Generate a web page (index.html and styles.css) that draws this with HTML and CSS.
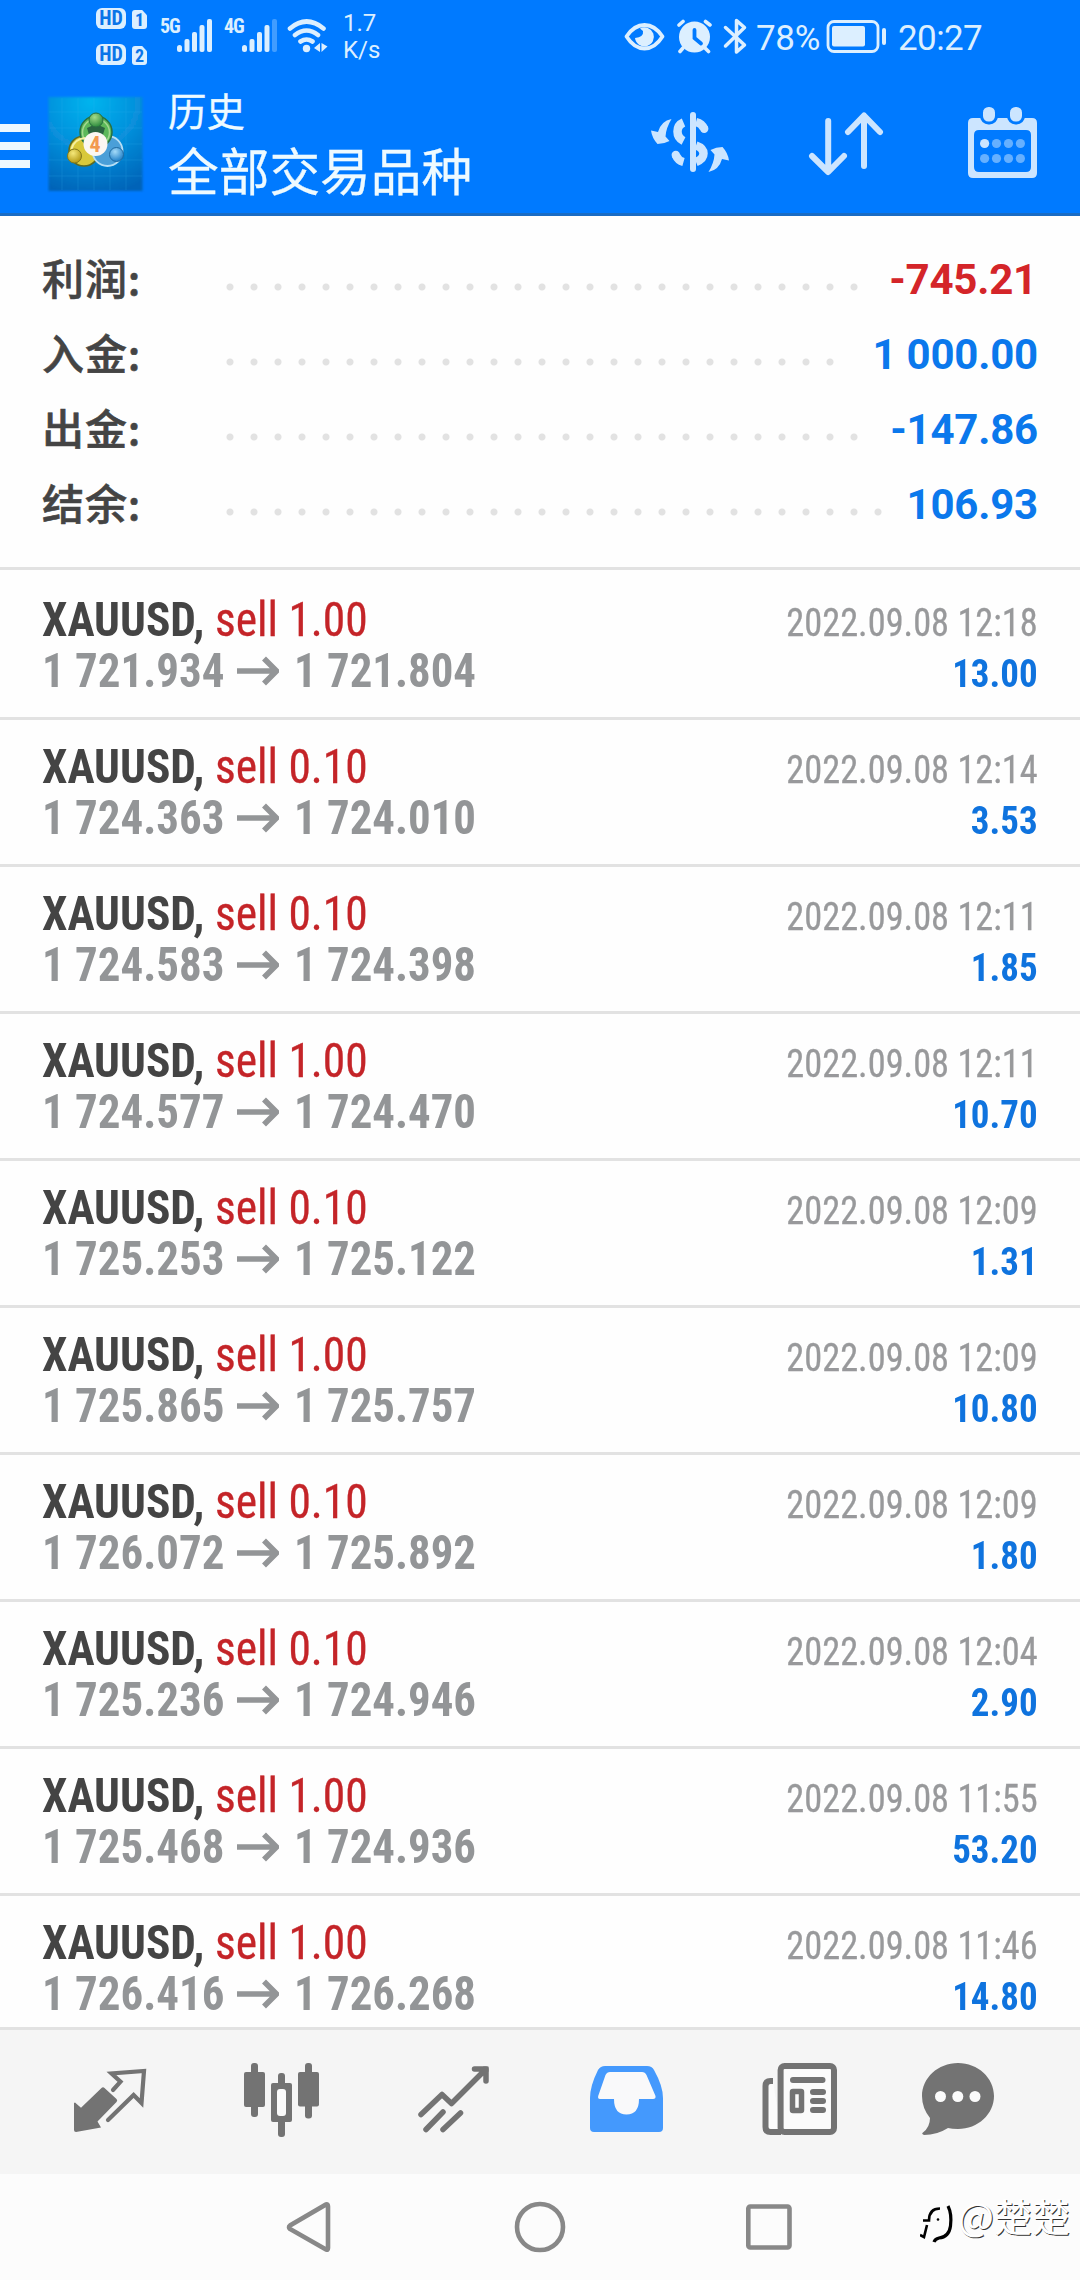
FILE: index.html
```html
<!DOCTYPE html>
<html lang="zh-CN">
<head>
<meta charset="utf-8">
<title>历史</title>
<link rel="stylesheet" href="styles.css">
</head>
<body>
<svg class="defs" width="0" height="0">
  <symbol id="arrow" viewBox="0 0 42 30"><path d="M0 15H38M27 2.500L39.500 15L27 27.500" fill="none" stroke="#939597" stroke-width="5.600"/></symbol>
</svg>

<header class="header">
  <div class="status">
    <div class="hd-col">
      <div class="hd-row"><span class="hd">HD</span><span class="sim">1</span></div>
      <div class="hd-row"><span class="hd">HD</span><span class="sim">2</span></div>
    </div>
    <span class="gen">5G</span>
    <svg class="signal" viewBox="0 0 35 34" width="35" height="34" fill="#dcefff"><rect x="0" y="26" width="5" height="7" rx="2.500"/><rect x="7.500" y="20" width="5" height="13" rx="2"/><rect x="15" y="13" width="5" height="20" rx="2"/><rect x="22.500" y="6" width="5" height="27" rx="2"/><rect x="30" y="0" width="5" height="33" rx="2"/></svg>
    <span class="gen gen-4">4G</span>
    <svg class="signal" viewBox="0 0 35 34" width="35" height="34" fill="#dcefff"><rect x="0" y="26" width="5" height="7" rx="2.500"/><rect x="7.500" y="20" width="5" height="13" rx="2"/><rect x="15" y="13" width="5" height="20" rx="2"/><rect x="22.500" y="6" width="5" height="27" rx="2"/><rect x="30" y="0" width="5" height="33" rx="2" opacity=".3"/></svg>
    <svg class="wifi" viewBox="287 18 41 36" width="41" height="36" fill="none" stroke="#dcefff" stroke-width="4.600" stroke-linecap="round"><path d="M290 28.500Q306.500 14.500 323.500 28.500M295 35Q306.500 26 318 35M300.500 41.500Q306.500 37.500 312.500 41.500"/><circle cx="306.500" cy="48.500" r="3.700" fill="#dcefff" stroke="none"/><path d="M314 48L320 43V52ZM321.500 43L327.500 46.500L321.500 52Z" fill="#dcefff" stroke="none"/></svg>
    <div class="speed"><span>1.7</span><span>K/s</span></div>
    <svg class="eye" viewBox="624 22 41 30" width="41" height="30"><path d="M626.500 36.500Q634 25 644.500 25T662.500 36.500Q655 48.500 644.500 48.500T626.500 36.500Z" fill="none" stroke="#dcefff" stroke-width="3.800" stroke-linejoin="round"/><path d="M640 28.500A9.500 9.500 0 1 1 635 38Q644 37 643 31Z" fill="#dcefff"/></svg>
    <svg class="alarm" viewBox="676 19 37 35" width="37" height="35"><path d="M679 25L683 21.500M710 25L705.500 21.500M683 48L680 51.500M705 48L708.500 51.500" stroke="#dcefff" stroke-width="3.600" stroke-linecap="round"/><circle cx="694.500" cy="37" r="15.500" fill="#dcefff"/><path d="M694.500 30V38L701 43.500" fill="none" stroke="#007aff" stroke-width="3.800" stroke-linecap="round"/></svg>
    <svg class="bt" viewBox="723 17 25 38" width="25" height="38"><path d="M725.500 27.500L744.500 45L736.500 52V20.500L744.500 27.500L725.500 46" fill="none" stroke="#dcefff" stroke-width="3.500" stroke-linecap="round" stroke-linejoin="round"/></svg>
    <span class="pct">78%</span>
    <svg class="batt" viewBox="826 19 61 35" width="61" height="35"><rect x="828" y="21.500" width="50" height="30" rx="6" fill="none" stroke="#dcefff" stroke-width="2.800"/><rect x="832" y="26" width="33" height="20.500" rx="2" fill="#dcefff"/><rect x="882" y="28" width="4" height="17" rx="2" fill="#dcefff"/></svg>
    <span class="clock">20:27</span>
  </div>

  <div class="appbar">
    <svg class="menu" viewBox="0 124 30 44" width="30" height="44" fill="#eef8ff"><path d="M0 124H30V132H0ZM0 142H30V150H0ZM0 160H30V168H0Z"/></svg>
    <svg class="logo" viewBox="47 95 98 98" width="98" height="98">
      <defs>
        <radialGradient id="lg" cx=".45" cy=".05" r="1"><stop offset="0" stop-color="#00b4ee"/><stop offset=".5" stop-color="#0790dc"/><stop offset="1" stop-color="#0064b8"/></radialGradient>
        <radialGradient id="gg" cx=".4" cy=".3" r=".7"><stop offset="0" stop-color="#a5dc8a"/><stop offset="1" stop-color="#2c8a3c"/></radialGradient>
        <radialGradient id="yg" cx=".4" cy=".3" r=".7"><stop offset="0" stop-color="#f5e87a"/><stop offset="1" stop-color="#b49a14"/></radialGradient>
        <radialGradient id="bg" cx=".4" cy=".3" r=".7"><stop offset="0" stop-color="#a4daf8"/><stop offset="1" stop-color="#2080c8"/></radialGradient>
        <filter id="soft"><feGaussianBlur stdDeviation="1.200"/></filter>
      </defs>
      <rect x="48.500" y="97" width="94" height="94" fill="url(#lg)" filter="url(#soft)"/>
      <path d="M62 98V190M78 98V190M94 98V190M110 98V190M126 98V190M49 112H142M49 128H142M49 144H142M49 160H142M49 176H142" stroke="#3ab4f0" stroke-width=".8" opacity=".25"/>
      <circle cx="84" cy="151" r="15" fill="#d8c83a" stroke="#5e6a20" stroke-width="1.500"/>
      <circle cx="107.500" cy="151" r="15" fill="#4a9fd8" stroke="#b6def4" stroke-width="1.800"/>
      <circle cx="96" cy="132" r="16" fill="#5cb85a" stroke="#2a7040" stroke-width="1.500"/>
      <circle cx="96" cy="132.500" r="13.500" fill="none" stroke="#a4d890" stroke-width="1.500"/>
      <path d="M71.500 149Q74 139 85 138" fill="none" stroke="#f5f0a0" stroke-width="2"/>
      <path d="M87 128L96 124L105 128L102 138H90Z" fill="#2b6440"/>
      <circle cx="74.500" cy="156" r="7" fill="url(#yg)" stroke="#83791a"/>
      <circle cx="116.500" cy="154.500" r="7" fill="url(#bg)" stroke="#206aa0"/>
      <circle cx="96" cy="120" r="7" fill="url(#gg)" stroke="#2a7040"/>
      <circle cx="95.500" cy="144" r="12" fill="#fbf7f2"/>
      <text x="95" y="151.500" text-anchor="middle" class="logo-num">4</text>
    </svg>
    <div class="titles"><div class="t1">历史</div><div class="t2">全部交易品种</div></div>
    <div class="actions">
      <svg viewBox="650 106 80 74" width="80" height="74">
        <g fill="none" stroke="#cce5ff" stroke-width="8.500"><path d="M683.500 122.500C675.500 126 675.500 137 683.500 141"/><path d="M683.500 162Q678 160.500 676 155.500M696 122Q702 123.500 704 128.500"/><path d="M696 145.500C706 149 706 158 696 162"/></g>
        <g fill="#cce5ff"><circle cx="675.800" cy="155" r="4.200"/><circle cx="704.200" cy="128.800" r="4.200"/><rect x="690" y="112" width="6" height="60" rx="3"/>
        <path id="swap" d="M671.500 119Q666 128 665.500 136.500L669.500 141Q664 144 657.500 144Q652 138 651 130.500L658 132Q661 121 671.500 119Z"/><use href="#swap" transform="rotate(180 690 145.500)"/></g>
      </svg>
      <svg class="sort" viewBox="808 106 76 74" width="76" height="74"><path d="M828.200 121V171M812 156L828.200 172L844 156M864 166V116M848 132L864 115.500L880 132" fill="none" stroke="#cce5ff" stroke-width="6" stroke-linecap="round" stroke-linejoin="round"/></svg>
      <svg class="cal" viewBox="967 106 71 74" width="71" height="74"><path fill-rule="evenodd" fill="#cce5ff" d="M973 118H1032Q1037 118 1037 123V173Q1037 178 1032 178H973Q968 178 968 173V123Q968 118 973 118ZM979 130Q974 130 974 135V167Q974 172 979 172H1026Q1031 172 1031 167V135Q1031 130 1026 130Z"/><g fill="#cce5ff" stroke="#007aff" stroke-width="3"><rect x="981.500" y="105.500" width="15" height="17.500" rx="7"/><rect x="1008.500" y="105.500" width="15" height="17.500" rx="7"/></g><g fill="#66b0ff"><circle cx="984.600" cy="143.500" r="4.600" fill="#cce5ff"/><circle cx="996.500" cy="143.500" r="4.600"/><circle cx="1008.500" cy="143.500" r="4.600"/><circle cx="1020.400" cy="143.500" r="4.600"/><circle cx="984.600" cy="158.500" r="4.600"/><circle cx="996.500" cy="158.500" r="4.600"/><circle cx="1008.500" cy="158.500" r="4.600"/><circle cx="1020.400" cy="158.500" r="4.600"/></g></svg>
    </div>
  </div>
</header>

<section class="summary">
  <div class="sum-row"><span class="label">利润:</span><span class="dots" style="width:648px"></span><span class="value neg">-745.21</span></div>
  <div class="sum-row"><span class="label">入金:</span><span class="dots" style="width:624px"></span><span class="value">1 000.00</span></div>
  <div class="sum-row"><span class="label">出金:</span><span class="dots" style="width:648px"></span><span class="value">-147.86</span></div>
  <div class="sum-row"><span class="label">结余:</span><span class="dots" style="width:672px"></span><span class="value">106.93</span></div>
</section>

<main class="deals">
  <article class="deal"><div class="l1"><b class="sym">XAUUSD,</b><span class="op">sell 1.00</span></div><time>2022.09.08 12:18</time><div class="l2"><span class="px">1 721.934</span><svg><use href="#arrow"/></svg><span class="px">1 721.804</span></div><span class="profit">13.00</span></article>
  <article class="deal"><div class="l1"><b class="sym">XAUUSD,</b><span class="op">sell 0.10</span></div><time>2022.09.08 12:14</time><div class="l2"><span class="px">1 724.363</span><svg><use href="#arrow"/></svg><span class="px">1 724.010</span></div><span class="profit">3.53</span></article>
  <article class="deal"><div class="l1"><b class="sym">XAUUSD,</b><span class="op">sell 0.10</span></div><time>2022.09.08 12:11</time><div class="l2"><span class="px">1 724.583</span><svg><use href="#arrow"/></svg><span class="px">1 724.398</span></div><span class="profit">1.85</span></article>
  <article class="deal"><div class="l1"><b class="sym">XAUUSD,</b><span class="op">sell 1.00</span></div><time>2022.09.08 12:11</time><div class="l2"><span class="px">1 724.577</span><svg><use href="#arrow"/></svg><span class="px">1 724.470</span></div><span class="profit">10.70</span></article>
  <article class="deal"><div class="l1"><b class="sym">XAUUSD,</b><span class="op">sell 0.10</span></div><time>2022.09.08 12:09</time><div class="l2"><span class="px">1 725.253</span><svg><use href="#arrow"/></svg><span class="px">1 725.122</span></div><span class="profit">1.31</span></article>
  <article class="deal"><div class="l1"><b class="sym">XAUUSD,</b><span class="op">sell 1.00</span></div><time>2022.09.08 12:09</time><div class="l2"><span class="px">1 725.865</span><svg><use href="#arrow"/></svg><span class="px">1 725.757</span></div><span class="profit">10.80</span></article>
  <article class="deal"><div class="l1"><b class="sym">XAUUSD,</b><span class="op">sell 0.10</span></div><time>2022.09.08 12:09</time><div class="l2"><span class="px">1 726.072</span><svg><use href="#arrow"/></svg><span class="px">1 725.892</span></div><span class="profit">1.80</span></article>
  <article class="deal"><div class="l1"><b class="sym">XAUUSD,</b><span class="op">sell 0.10</span></div><time>2022.09.08 12:04</time><div class="l2"><span class="px">1 725.236</span><svg><use href="#arrow"/></svg><span class="px">1 724.946</span></div><span class="profit">2.90</span></article>
  <article class="deal"><div class="l1"><b class="sym">XAUUSD,</b><span class="op">sell 1.00</span></div><time>2022.09.08 11:55</time><div class="l2"><span class="px">1 725.468</span><svg><use href="#arrow"/></svg><span class="px">1 724.936</span></div><span class="profit">53.20</span></article>
  <article class="deal"><div class="l1"><b class="sym">XAUUSD,</b><span class="op">sell 1.00</span></div><time>2022.09.08 11:46</time><div class="l2"><span class="px">1 726.416</span><svg><use href="#arrow"/></svg><span class="px">1 726.268</span></div><span class="profit">14.80</span></article>
</main>

<nav class="tabs">
  <svg viewBox="74 2062 76 76"><path d="M75 2102.500L81 2107.700L101.500 2088Q103 2086.500 104.500 2088L116.500 2099Q118 2100.500 116.500 2102L97.500 2121.500L101 2127.500L76 2132Q74 2132 74 2130V2103Z" fill="#737373"/><path d="M113 2090L120.500 2081.700L111.500 2073.500L144 2071L141.500 2103L133.600 2095L108 2120" fill="none" stroke="#737373" stroke-width="4.200" stroke-linecap="round"/></svg>
  <svg viewBox="244 2062 76 76" fill="#737373"><rect x="251" y="2063" width="7" height="54" rx="3"/><rect x="244" y="2072" width="21" height="35" rx="2"/><rect x="278" y="2073" width="7" height="64" rx="3"/><rect x="271" y="2083" width="21" height="39" rx="2"/><rect x="305" y="2063" width="7" height="55.500" rx="3"/><rect x="298" y="2072" width="21" height="34.500" rx="2"/><rect x="277" y="2089" width="9" height="27" rx="3" fill="#fafafa"/></svg>
  <svg viewBox="418 2062 76 76" fill="none" stroke="#737373" stroke-width="5.500" stroke-linecap="round"><path d="M421 2114.500L442 2094.500L451.500 2103.500L485 2070M474.500 2069H486V2081" stroke-linejoin="round"/><path d="M483 2066.500H488.500V2072Z" fill="#737373" stroke="none"/><path d="M443 2112L426 2129.500M460.500 2113L443 2129.500"/></svg>
  <svg viewBox="590 2062 76 76"><path d="M605 2066H647Q652 2066 654 2070Q663 2086 663 2098V2128Q663 2132 659 2132H594Q590 2132 590 2128V2098Q590 2086 598 2070Q600.500 2066 605 2066Z" fill="#4499fd"/><path d="M610 2072H642Q645 2072 646.500 2075L655.500 2096Q656 2099 653 2099H639Q639 2114.500 626.500 2114.500T614 2099H600Q597.500 2099 598.200 2096L605.500 2075Q607 2072 610 2072Z" fill="#f9f9fa"/></svg>
  <svg viewBox="762 2062 76 76"><path d="M773 2081H770.500Q765.500 2081 765.500 2086V2127Q765.500 2132 770.500 2132H781" fill="#fbfbfb" stroke="#737373" stroke-width="6"/><rect x="780.600" y="2066" width="53.400" height="66" rx="4" fill="#fbfbfb" stroke="#737373" stroke-width="6"/><path d="M793 2080H822.500M813 2092H823M813 2101H823M813 2110H823" stroke="#737373" stroke-width="6" stroke-linecap="round"/><rect x="792.500" y="2091.500" width="9" height="19" rx=".5" fill="#fbfbfb" stroke="#737373" stroke-width="5.500" stroke-linejoin="round"/></svg>
  <svg viewBox="922 2062 76 76"><path d="M958 2063C978 2063 994 2078 994 2096S978 2129 958 2129Q952 2129 948 2128Q937 2135 924 2135Q921 2134 923 2132.500Q930 2127 930 2118Q922 2108 922 2096C922 2078 938 2063 958 2063Z" fill="#737373"/><g fill="#fbfbfb"><circle cx="940.500" cy="2096.500" r="5.500"/><circle cx="957.800" cy="2096.500" r="5.500"/><circle cx="975" cy="2096.500" r="5.500"/></g></svg>
</nav>

<footer class="sysnav">
  <svg class="back" viewBox="286 2200 46 54" width="46" height="54"><path d="M326 2204.500Q328 2204 328 2206.500V2248Q328 2250.500 326 2249.500L290 2229Q288 2227 290 2225.500Z"/></svg>
  <svg class="home" viewBox="514 2200 54 54" width="54" height="54"><circle cx="540" cy="2227" r="23"/></svg>
  <svg class="recent" viewBox="745 2200 48 54" width="48" height="54"><rect x="748.300" y="2206.500" width="41.200" height="41" rx="2"/></svg>
  <div class="mark">
    <svg viewBox="920 2204 36 40" width="36" height="40"><path d="M923 2220.500H929Q929 2208.500 940 2208.500M927 2225L924 2237L920 2235" fill="none" stroke="#000" stroke-width="2.600"/><path d="M948 2206Q952 2214 950.500 2226Q949 2237 939 2238Q935 2239 934 2242" fill="none" stroke="#000" stroke-width="3.200"/><circle cx="938" cy="2219.500" r="1.300"/></svg>
    <span>@楚楚</span>
  </div>
</footer>
</body>
</html>
```
FILE: styles.css
```css
* { box-sizing: border-box; }
body {
  margin: 0;
  width: 1080px;
  height: 2280px;
  overflow: hidden;
  display: flex;
  flex-direction: column;
  background: #fefefe;
  font-family: Roboto, "Noto Sans CJK SC", sans-serif;
}
svg { display: block; flex: none; }
.defs { position: absolute; }

/* header */
.header { height: 216px; background: #007aff; border-bottom: 3px solid #1a6cc4; color: #eefaff; }
.status { display: flex; align-items: flex-start; height: 80px; padding-left: 96px; color: #dcefff; }
.status > * { flex: none; }
.hd-col { display: flex; flex-direction: column; gap: 15px; padding-top: 8px; width: 64px; }
.hd-row { display: flex; align-items: flex-end; gap: 6px; height: 21px; color: #0a74e8; font: 700 18px/21px "Roboto Condensed", Roboto, sans-serif; }
.hd { width: 30px; height: 21px; border-radius: 6px; background: #dcefff; text-align: center; font-size: 20px; }
.sim { width: 15px; height: 19px; line-height: 20px; border-radius: 3px; background: #dcefff; text-align: center; clip-path: polygon(0 0, 68% 0, 100% 28%, 100% 100%, 0 100%); }
.gen { width: 17px; margin-top: 15px; font: 700 20px/23px "Roboto Condensed", Roboto, sans-serif; letter-spacing: -1px; }
.gen-4 { width: 18px; margin-left: 12px; }
.signal { margin-top: 19px; }
.wifi { margin: 18px 0 0 10px; }
.speed { display: flex; flex-direction: column; margin: 10px 0 0 15px; width: 51px; font-size: 24px; line-height: 27px; }
.eye { margin: 22px 0 0 230px; }
.alarm { margin: 19px 0 0 11px; }
.bt { margin: 17px 0 0 10px; }
.pct { width: 70px; margin: 18px 0 0 8px; font-size: 35px; line-height: 42px; letter-spacing: -.3px; }
.batt { margin: 19px 0 0 0; }
.clock { margin: 18px 0 0 11px; font-size: 35px; line-height: 42px; letter-spacing: -.6px; }

.appbar { display: flex; align-items: flex-start; height: 133px; }
.menu { margin-top: 44px; }
.logo { margin: 15px 0 0 17px; }
.logo-num { font: 700 22px "Roboto Condensed", Roboto, sans-serif; fill: #f29a50; }
.titles { margin: 4px 0 0 23px; font-family: "Noto Sans CJK SC", sans-serif; white-space: nowrap; -webkit-text-stroke: .3px #eefaff; }
.t1 { height: 55px; font-size: 38.500px; line-height: 50px; }
.t2 { font-size: 50.700px; line-height: 60px; }
.actions { display: flex; margin: 26px 42px 0 auto; }
.sort { margin-left: 78px; }
.cal { margin-left: 83px; }

/* totals */
.summary { height: 354px; padding: 26px 42px 0; border-bottom: 3px solid #e2e2e2; }
.sum-row { display: flex; height: 75px; line-height: 75px; font-size: 42px; font-weight: 700; }
.label { width: 176px; color: #444; font: 500 42px/70px "Noto Sans CJK SC", sans-serif; letter-spacing: .9px; -webkit-text-stroke: .6px #444; }
.dots { height: 75px; background: radial-gradient(circle at 12px 45px, #e2e2e2 3px, transparent 4px) 0 0 / 24px 75px; }
.value { margin-left: auto; color: #0b78ec; white-space: pre; letter-spacing: -.2px; }
.neg { margin-right: 1px; color: #d42529; }

/* deals */
.deals { height: 1457px; padding-top: 3px; overflow: hidden; font-family: "Roboto Condensed", Roboto, sans-serif; }
.deal {
  display: grid;
  grid-template-columns: 1fr auto;
  grid-template-rows: 51px 51px;
  height: 147px;
  padding: 21px 42px 0;
  border-bottom: 3px solid #e2e2e2;
  line-height: 51px;
}
.l1, .l2 { display: flex; font-size: 48px; white-space: pre; }
.sym, .op, .px { transform-origin: 0 50%; }
.sym { color: #444; transform: scaleX(.945); }
.op { margin-left: 1px; color: #c42428; transform: scaleX(.948); -webkit-text-stroke: .3px #c42428; }
.px { color: #939597; font-weight: 700; transform: scaleX(.937); }
.l2 svg { width: 42px; height: 30px; margin: 11px 14px 0 0; }
.l2 svg + .px { margin-left: 1px; transform: scaleX(.934); }
.deal time, .profit { padding-top: 4px; font-size: 39px; text-align: right; transform: scaleX(.932); transform-origin: 100% 50%; }
.deal time { color: #98999b; -webkit-text-stroke: .3px #98999b; }
.profit { color: #0f73de; font-weight: 700; transform: scaleX(.948); }

/* tab bar */
.tabs {
  display: grid;
  grid-template-columns: 170px 174px 172px 172px 160px 76px;
  height: 147px;
  padding: 32px 0 0 74px;
  border-top: 3px solid #e2e2e2;
  background: #f5f5f5;
}
.tabs svg { width: 76px; height: 76px; }

/* system navigation */
.sysnav { display: flex; height: 106px; padding: 26px 0 0 286px; background: #fcfcfc; }
.sysnav > svg { fill: none; stroke: #888; stroke-width: 4.6px; }
.home { margin-left: 182px; }
.recent { margin-left: 177px; }
.mark { display: flex; margin-left: 127px; padding-top: 4px; color: #fff; font: 400 38px/40px "Noto Sans CJK SC", sans-serif; text-shadow: 1px 1px 0 #333; white-space: nowrap; }
.mark span { margin: -9px 0 0 2px; }
```
